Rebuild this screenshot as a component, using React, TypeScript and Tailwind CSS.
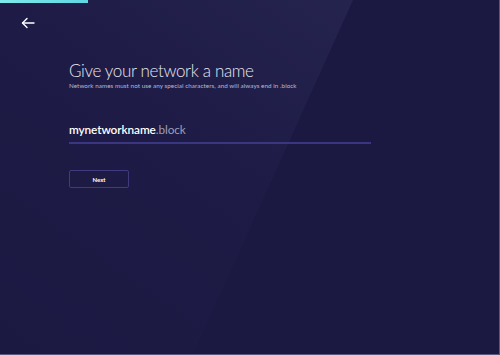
import React from 'react';

export default function App() {
  return (
    <div className="relative w-[500px] h-[355px] overflow-hidden bg-[#1b1942] border-r border-b border-[#5a5878] font-['Lato',sans-serif]">
      {/* diagonal sheen */}
      <div className="pointer-events-none absolute inset-0 [clip-path:polygon(0_0,353px_0,193px_100%,0_100%)] bg-gradient-to-bl from-[#282752] via-[#1e1c46] to-[#1b1942]" />

      {/* progress */}
      <div className="relative h-[3px] w-[88px] bg-gradient-to-r from-[#7eeaea] to-[#5fd6e3]" />

      <div className="relative flex flex-col">
        <button className="ml-[20px] mt-[13px] w-[16px] h-[14px] flex items-center justify-center text-white">
          <svg width="14" height="12" viewBox="0 0 14 12" fill="none" stroke="currentColor" strokeWidth="1.4" strokeLinecap="round" strokeLinejoin="round">
            <path d="M13 6H1.5" />
            <path d="M6 1.5L1.5 6L6 10.5" />
          </svg>
        </button>

        <div className="ml-[69px] mt-[31px] w-[302px] flex flex-col">
          <h1 className="text-[17px] leading-[20px] font-light text-[#e6e6f0] tracking-[-0.35px]">Give your network a name</h1>
          <p className="mt-[1px] text-[6.3px] leading-[8px] text-[#b9b8d4] tracking-[0.05px]">
            Network names must not use any special characters, and will always end in .block
          </p>

          <div className="mt-[32px] pb-[5px] border-b-2 border-[#3a3682] text-[11.8px] leading-[15px] tracking-[-0.1px]">
            <span className="font-semibold text-white">mynetworkname</span>
            <span className="text-[#9d9cb8]">.block</span>
          </div>

          <button className="mt-[26px] w-[60px] h-[18px] rounded-[2px] border border-[#3f3b7e] text-[6px] font-bold text-white">
            Next
          </button>
        </div>
      </div>
    </div>
  );
}
